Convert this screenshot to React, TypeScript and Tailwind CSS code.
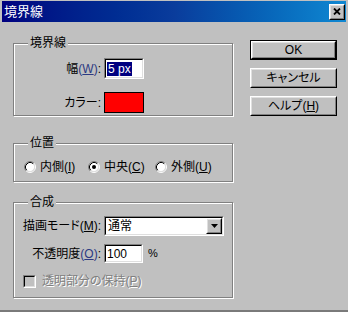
import type { ReactNode } from "react";

const FONT =
  "font-['Liberation_Sans','Noto_Sans_CJK_JP',sans-serif] [font-feature-settings:'palt']";

function Raised({ children, className = "" }: { children?: ReactNode; className?: string }) {
  return (
    <div
      className={`border border-t-white border-l-white border-r-black border-b-black bg-[#c0c0c0] ${className}`}
    >
      <div className="flex h-full w-full items-center justify-center border border-t-[#dfdfdf] border-l-[#dfdfdf] border-r-[#808080] border-b-[#808080]">
        {children}
      </div>
    </div>
  );
}

function Sunken({
  children,
  className = "",
  fill = "bg-white",
}: {
  children?: ReactNode;
  className?: string;
  fill?: string;
}) {
  return (
    <div
      className={`border border-t-[#808080] border-l-[#808080] border-r-white border-b-white ${className}`}
    >
      <div
        className={`flex h-full w-full items-center border border-t-black border-l-black border-r-[#dfdfdf] border-b-[#dfdfdf] ${fill}`}
      >
        {children}
      </div>
    </div>
  );
}

function Group({
  label,
  className = "",
  children,
}: {
  label: string;
  className?: string;
  children: ReactNode;
}) {
  return (
    <div
      className={`relative border border-[#808080] shadow-[inset_1px_1px_0_#fff,1px_1px_0_#fff] ${className}`}
    >
      <span className="absolute left-[14px] top-[-8px] bg-[#c0c0c0] px-[2px] text-[12px] leading-[14px]">
        {label}
      </span>
      {children}
    </div>
  );
}

function Radio({ checked = false }: { checked?: boolean }) {
  return (
    <svg width="12" height="12" viewBox="0 0 12 12" className="shrink-0">
      <circle cx="6" cy="6" r="4.5" fill="#fff" />
      <path d="M2.11 9.89A5.5 5.5 0 0 1 9.89 2.11" fill="none" stroke="#808080" />
      <path d="M9.89 2.11A5.5 5.5 0 0 1 2.11 9.89" fill="none" stroke="#fff" />
      <path d="M2.82 9.18A4.5 4.5 0 0 1 9.18 2.82" fill="none" stroke="#000" />
      <path d="M9.18 2.82A4.5 4.5 0 0 1 2.82 9.18" fill="none" stroke="#dfdfdf" />
      {checked ? <circle cx="6" cy="6" r="2" fill="#000" /> : null}
    </svg>
  );
}

function Key({ k, tint = false }: { k: string; tint?: boolean }) {
  return (
    <span className={tint ? "text-[#2c3a82]" : undefined}>
      (<span className="underline underline-offset-[1px]">{k}</span>)
    </span>
  );
}

export default function App() {
  return (
    <div
      className={`flex h-[312px] w-[348px] flex-col overflow-hidden border-b-2 border-[#7a7a7a] bg-[#c0c0c0] text-black ${FONT}`}
    >
      {/* title bar */}
      <div className="mx-[2px] mt-[1px] flex h-[21px] items-center bg-linear-to-r from-[#000080] via-[#0a3c9c] to-[#1088d2]">
        <span className="pl-[2px] text-[13px] leading-none text-white">境界線</span>
        <Raised className="mr-[1px] ml-auto h-[16px] w-[16px]">
          <svg width="8" height="7" viewBox="0 0 8 7">
            <path d="M1 0.5 L7 6.5 M7 0.5 L1 6.5" stroke="#000" strokeWidth="1.8" />
          </svg>
        </Raised>
      </div>

      <div className="flex">
        {/* left column */}
        <div className="ml-[13px] flex w-[220px] flex-col">
          <Group label="境界線" className="mt-[21px] h-[73px]">
            <div className="grid grid-cols-[87px_40px] items-center gap-x-[3px] gap-y-[13px] pt-[14px] text-[12px]">
              <span className="text-right">
                幅<Key k="W" tint />:
              </span>
              <Sunken className="h-[21px]">
                <span className="ml-[1px] bg-[#000080] px-[1px] leading-[14px] text-white">5 px</span>
              </Sunken>
              <span className="text-right">カラー:</span>
              <div className="h-[21px] border border-black bg-[#ff0000]" />
            </div>
          </Group>

          <Group label="位置" className="mt-[27px] h-[39px]">
            <div className="flex h-[13px] items-center pt-[0px] pl-[10px] text-[12px] mt-[16px]">
              <label className="flex w-[64px] items-center gap-[4px]">
                <Radio />
                <span>
                  内側<Key k="I" />
                </span>
              </label>
              <label className="flex w-[67px] items-center gap-[4px]">
                <Radio checked />
                <span>
                  中央<Key k="C" />
                </span>
              </label>
              <label className="flex items-center gap-[4px]">
                <Radio />
                <span>
                  外側<Key k="U" />
                </span>
              </label>
            </div>
          </Group>

          <Group label="合成" className="mt-[20px] h-[96px]">
            <div className="grid grid-cols-[87px_auto] items-center gap-x-[3px] gap-y-[8px] pt-[13px] text-[12px]">
              <span className="text-right">
                描画モード<Key k="M" />:
              </span>
              <Sunken className="h-[20px] w-[120px]">
                <span className="pl-[2px]">通常</span>
                <Raised className="mr-0 ml-auto h-full w-[16px]">
                  <svg width="7" height="4" viewBox="0 0 7 4">
                    <path d="M0 0 H7 L3.5 4 Z" fill="#000" />
                  </svg>
                </Raised>
              </Sunken>
              <span className="text-right">
                不透明度<Key k="O" tint />:
              </span>
              <div className="flex items-center">
                <Sunken className="h-[19px] w-[39px]">
                  <span className="pl-[1px]">100</span>
                </Sunken>
                <span className="ml-[5px] text-[11px]">%</span>
              </div>
            </div>
            <div className="mt-[9px] flex items-center gap-[6px] pl-[9px] text-[12px]">
              <Sunken className="h-[13px] w-[13px]" fill="bg-[#c0c0c0]" />
              <span className="text-[#808080] [text-shadow:1px_1px_0_#fff]">
                透明部分の保持<Key k="P" />
              </span>
            </div>
          </Group>
        </div>

        {/* right column */}
        <div className="ml-[17px] flex w-[87px] flex-col gap-[8px] pt-[18px] text-[12px]">
          <div className="h-[20px] border border-black">
            <Raised className="h-full w-full">OK</Raised>
          </div>
          <Raised className="h-[20px]">キャンセル</Raised>
          <Raised className="h-[20px]">
            <span>
              ヘルプ<Key k="H" />
            </span>
          </Raised>
        </div>
      </div>
    </div>
  );
}
